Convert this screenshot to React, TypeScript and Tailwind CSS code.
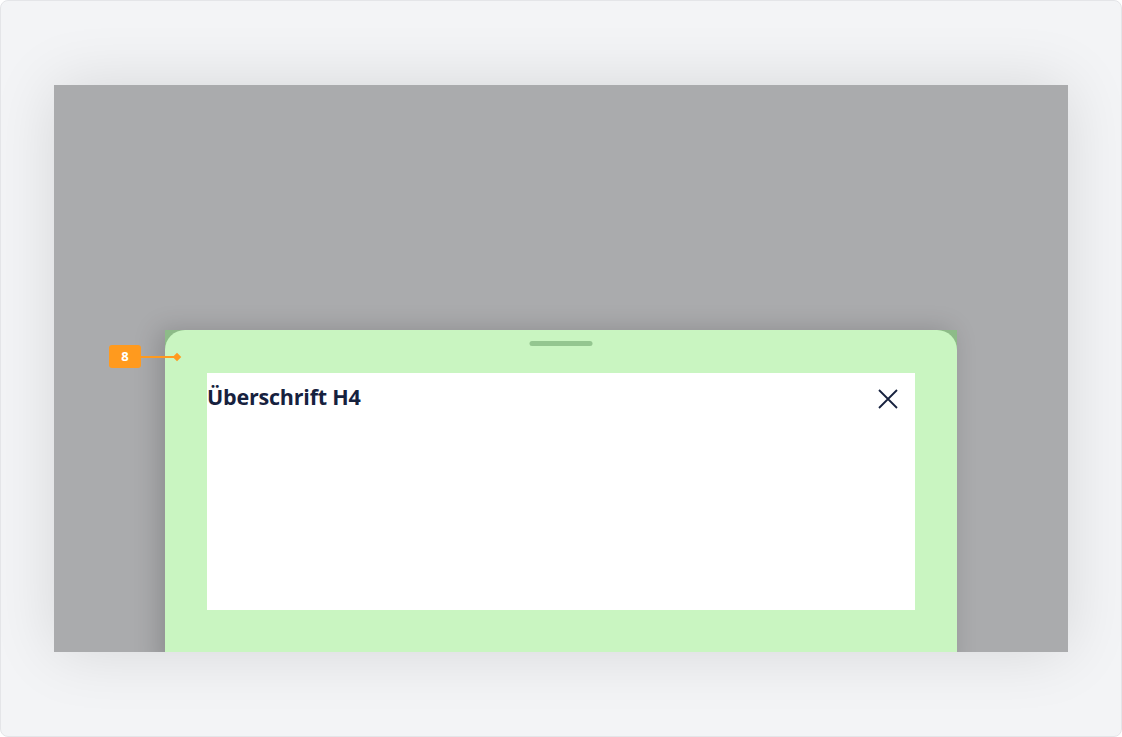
import React from "react";

export default function App() {
  return (
    <div className="w-[1122px] h-[737px] bg-[#f3f4f6] border border-[#e4e5e8] rounded-[8px] overflow-hidden relative">
      <div className="pt-[84px] pl-[53px]">
        <div className="w-[1014px] h-[567px] bg-[#aaabad] shadow-[0_0_60px_rgba(0,0,0,0.12)] overflow-hidden relative">
          <div className="pt-[245px] pl-[111px]">
            <div className="w-[792px] bg-[#8dbb88] shadow-[-6px_0_24px_rgba(0,0,0,0.18)]">
              <div className="bg-[#c9f5c1] rounded-t-[20px] px-[42px] pt-[43px] pb-[60px] relative">
                <div className="absolute left-1/2 -translate-x-1/2 top-[11px] w-[63px] h-[5px] rounded-full bg-[#94c690]" />
                <div className="bg-white h-[237px] flex justify-between items-start">
                  <div
                    className="text-[21.5px] font-bold text-[#16213e] leading-none pt-[13px] tracking-[-0.2px]"
                    style={{ fontFamily: '"Open Sans", "Noto Sans", sans-serif' }}
                  >
                    Überschrift H4
                  </div>
                  <svg width="22" height="22" viewBox="0 0 22 22" className="mt-[15px] mr-[16px]">
                    <path d="M2 2 L20 20 M20 2 L2 20" stroke="#16213e" strokeWidth="1.8" fill="none" />
                  </svg>
                </div>
              </div>
            </div>
          </div>
        </div>
      </div>
      <div className="absolute left-[108px] top-[344px] flex items-center">
        <div
          className="w-[32px] h-[23px] rounded-[3px] bg-[#ff9a1e] text-white text-[13px] font-bold flex items-center justify-center"
          style={{ fontFamily: '"Open Sans", sans-serif' }}
        >
          8
        </div>
        <div className="w-[36px] h-[2px] bg-[#ff9a1e]" />
        <div className="w-[6px] h-[6px] bg-[#ff9a1e] rotate-45 -ml-[3px]" />
      </div>
    </div>
  );
}
